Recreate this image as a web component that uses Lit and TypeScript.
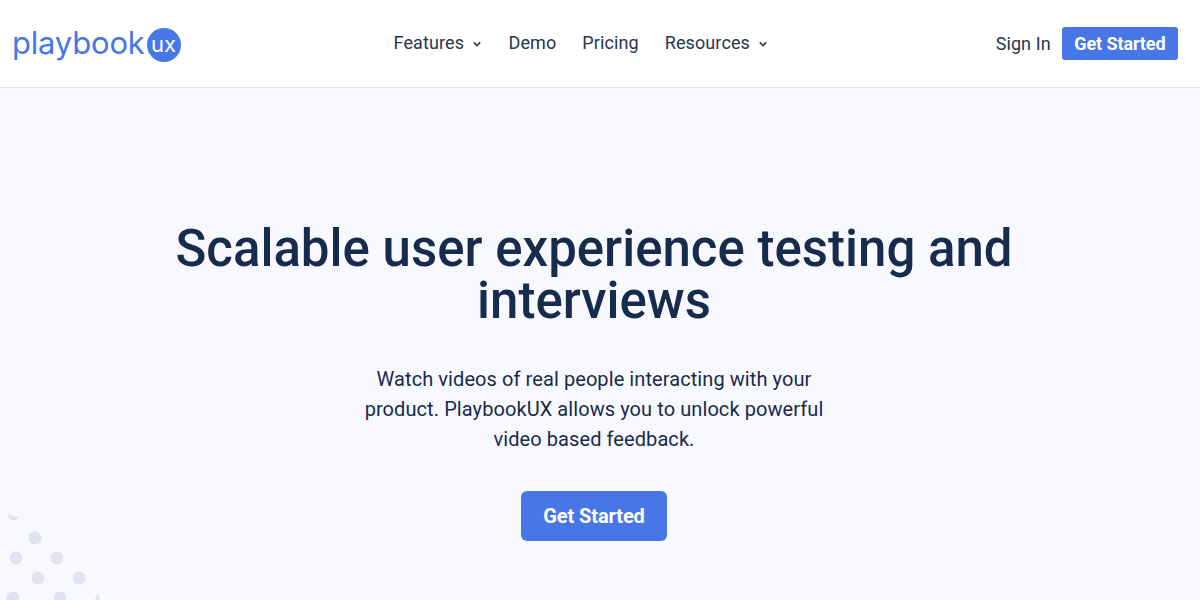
import { LitElement, html, css, svg } from "lit";
import { customElement } from "lit/decorators.js";

const dots = [
  [35, 38],
  [16, 58],
  [57, 58],
  [38, 78],
  [79, 78],
  [13, 98],
  [60, 98],
];

const chevron = html`<svg class="chev" viewBox="0 0 8 6" width="8" height="6">
  <path d="M.8 1.4L4 4.6L7.2 1.4" fill="none" stroke="currentColor" stroke-width="1.5" />
</svg>`;

@customElement("app-root")
export class AppRoot extends LitElement {
  static styles = css`
    :host {
      display: block;
      height: 600px;
      overflow: hidden;
      position: relative;
      background: #f8f9fe;
      font-family: Roboto, sans-serif;
      color: #172b4d;
    }
    header {
      height: 87px;
      background: #fff;
      border-bottom: 1px solid #e2e4ec;
      display: grid;
      grid-template-columns: 1fr auto 1fr;
      align-items: center;
      padding: 0 22px 0 13px;
    }
    .logo {
      display: flex;
      align-items: center;
      margin-left: -1px;
      color: #4777e6;
      font-family: Inter, sans-serif;
      font-size: 31px;
      line-height: 40px;
      letter-spacing: -0.2px;
    }
    .word {
      margin-top: -1px;
    }
    .badge {
      width: 34px;
      height: 34px;
      margin: 3px 0 0 2px;
      border-radius: 50%;
      background: #4777e6;
      color: #fff;
      font-size: 22px;
      line-height: 32px;
      letter-spacing: 0;
      text-align: center;
    }
    nav {
      display: flex;
      gap: 26px;
      font-size: 18px;
      letter-spacing: 0.1px;
      color: #263550;
      margin: -2px 29px 0 0;
    }
    nav a {
      display: flex;
      align-items: center;
    }
    .chev {
      margin: 2px 1.5px 0 9px;
    }
    .right {
      display: flex;
      align-items: center;
      justify-content: flex-end;
      gap: 11px;
      font-size: 18px;
      letter-spacing: 0.1px;
      color: #263550;
    }
    .right > a:first-child {
      margin-top: -1px;
    }
    .btn {
      background: #4777e6;
      color: #fff;
      font-weight: 700;
      letter-spacing: -0.1px;
      border-radius: 3px;
      padding: 0 12.5px;
      height: 33px;
      line-height: 33px;
    }
    main {
      display: flex;
      flex-direction: column;
      align-items: center;
      padding: 135px 12px 0 0;
      text-align: center;
    }
    h1 {
      margin: 0;
      width: 900px;
      font-size: 51px;
      line-height: 52px;
      font-weight: 500;
    }
    p {
      margin: 37px 0 0;
      width: 480px;
      font-size: 20px;
      line-height: 30px;
      letter-spacing: 0.08px;
    }
    .cta {
      margin-top: 37px;
      width: 146px;
      height: 50px;
      line-height: 50px;
      font-size: 20px;
      border-radius: 6px;
      padding: 0;
    }
    .dots {
      position: absolute;
      left: 0;
      bottom: 0;
    }
  `;

  render() {
    return html`
      <header>
        <div class="logo"><span class="word">playbook</span><span class="badge">ux</span></div>
        <nav>
          <a>Features${chevron}</a>
          <a>Demo</a>
          <a>Pricing</a>
          <a>Resources${chevron}</a>
        </nav>
        <div class="right">
          <a>Sign In</a>
          <a class="btn">Get Started</a>
        </div>
      </header>
      <main>
        <h1>Scalable user experience testing and interviews</h1>
        <p>
          Watch videos of real people interacting with your product. PlaybookUX
          allows you to unlock powerful video based feedback.
        </p>
        <a class="btn cta">Get Started</a>
      </main>
      <svg class="dots" width="110" height="100" viewBox="0 0 110 100">
        ${svg`<path d="M7 14L19 17.5Q15 22 11 20Q8 18 7 14z" fill="#e0e3f0" />`}
        ${dots.map(([x, y]) => svg`<circle cx=${x} cy=${y} r="6.5" fill="#e0e3f0" />`)}
        ${svg`<path d="M95 100Q96 96 97.5 93Q99.5 96 100 100z" fill="#e0e3f0" />`}
      </svg>
    `;
  }
}
